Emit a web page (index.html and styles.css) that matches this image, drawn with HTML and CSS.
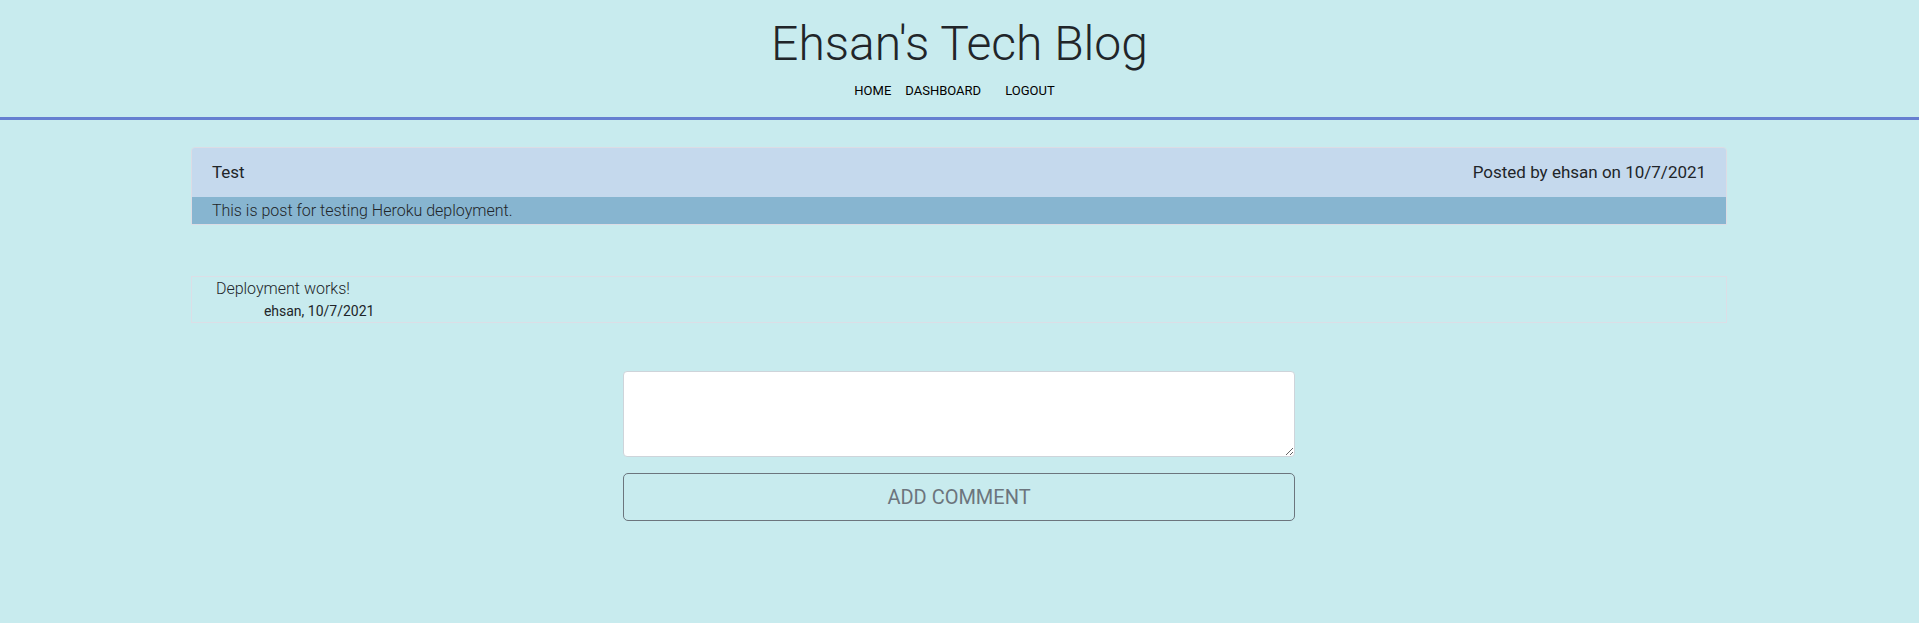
FILE: index.html
```html
<!DOCTYPE html>
<html lang="en">
<head>
<meta charset="utf-8">
<title>Ehsan's Tech Blog</title>
<link rel="stylesheet" href="styles.css">
</head>
<body>
<header class="site-header">
  <h1 class="site-title">Ehsan's Tech Blog</h1>
  <nav class="site-nav">
    <a class="nav-link" href="#home">HOME</a>
    <a class="nav-link" href="#dashboard">DASHBOARD</a>
    <a class="nav-link nav-logout" href="#logout">LOGOUT</a>
  </nav>
</header>
<main class="content">
  <article class="post">
    <header class="post-header">
      <span>Test</span>
      <span>Posted by ehsan on 10/7/2021</span>
    </header>
    <p class="post-body">This is post for testing Heroku deployment.</p>
  </article>
  <section class="comment">
    <p class="comment-text">Deployment works!</p>
    <p class="comment-meta">ehsan, 10/7/2021</p>
  </section>
  <form class="comment-form">
    <textarea class="comment-input" rows="3" aria-label="Comment"></textarea>
    <button class="comment-button" type="button">ADD COMMENT</button>
  </form>
</main>
</body>
</html>
```
FILE: styles.css
```css
* {
  box-sizing: border-box;
}

body {
  margin: 0;
  background: #c8ebee;
  color: #212529;
  font-family: Roboto, "Liberation Sans", sans-serif;
  font-size: 16px;
  font-weight: 300;
  line-height: 24px;
}

p {
  margin: 0;
}

.site-header {
  padding: 15px 0 16px;
  border-bottom: 3px solid #667fd0;
}

.site-title {
  margin: 0 0 7px;
  font-size: 48px;
  font-weight: 300;
  line-height: 58px;
  text-align: center;
}

.site-nav {
  display: flex;
  justify-content: center;
  gap: 14px;
  padding-right: 10px;
  font-size: 13px;
  font-weight: 400;
  line-height: 21px;
}

.nav-link {
  color: #000;
  text-decoration: none;
}

.nav-logout {
  margin-left: 10px;
}

.content {
  margin: 0 10% 0 calc(10% - 1px);
  padding-top: 27px;
}

.post {
  border: 1px solid #dcdce4;
  border-radius: 4px 4px 0 0;
}

.post-header {
  display: flex;
  justify-content: space-between;
  padding: 12px 20px;
  border-radius: 3px 3px 0 0;
  background: #c5d9ed;
  font-size: 17px;
  font-weight: 400;
  line-height: 25px;
}

.post-body {
  padding: 2px 20px 1px;
  background: #87b5d0;
}

.comment {
  margin-top: 51px;
  padding: 0 24px;
  border: 1px solid #dcdee6;
}

.comment-meta {
  padding-left: 48px;
  font-size: 14px;
  font-weight: 400;
  line-height: 21px;
}

.comment-form {
  display: flex;
  flex-direction: column;
  gap: 16px;
  width: 43.75%;
  margin: 48px auto;
}

.comment-input {
  height: 86px;
  padding: 6px 12px;
  border: 1px solid #ced4da;
  border-radius: 4px;
  background: #fff;
  color: #495057;
  font: inherit;
  resize: vertical;
}

.comment-button {
  padding: 8px 16px;
  border: 1px solid #6c757d;
  border-radius: 5px;
  background: transparent;
  color: #6c757d;
  font-family: inherit;
  font-size: 20px;
  font-weight: 400;
  line-height: 30px;
}
```
